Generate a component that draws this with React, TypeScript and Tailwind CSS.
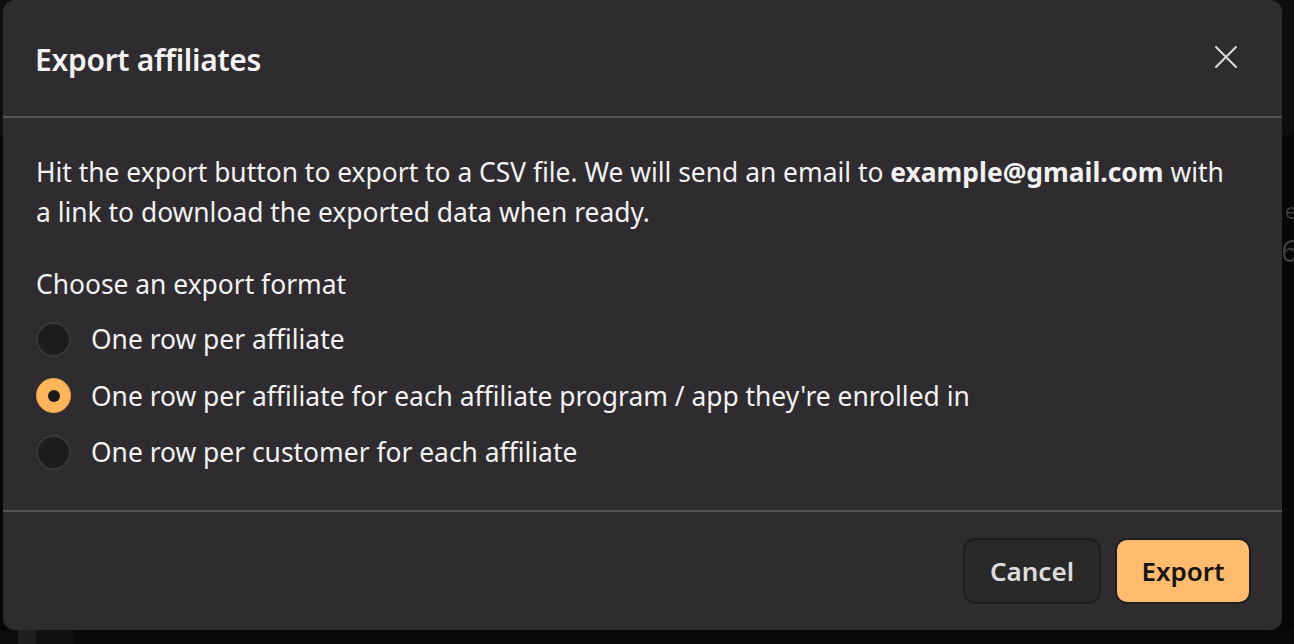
const options = [
  "One row per affiliate",
  "One row per affiliate for each affiliate program / app they're enrolled in",
  "One row per customer for each affiliate",
];

const App = () => {
  const selected = 1;

  return (
    <div className="relative w-full h-[644px] overflow-hidden bg-[#070707] font-['Noto_Sans',sans-serif]">
      {/* Page behind the backdrop */}
      <div className="h-[135px] bg-[#0e0e0e]" />
      <div className="flex justify-end pt-[60px]">
        <div className="w-[11px] overflow-hidden flex flex-col gap-2 text-[#3c3c3c]">
          <span className="text-[22px] leading-[30px] -ml-[4px]">ie</span>
          <span className="text-[30px] leading-[36px] -ml-[2px]">6</span>
        </div>
      </div>
      <div className="absolute left-0 bottom-0 flex h-[14px] w-full">
        <div className="w-[18px] bg-[#0b0b0b]" />
        <div className="w-[18px] bg-[#202020]" />
        <div className="w-[38px] bg-[#111111]" />
        <div className="flex-1 bg-[#0a0a0a]" />
      </div>

      {/* Modal */}
      <div className="absolute left-[3px] top-0 w-[1279px] h-[630px] rounded-[12px] bg-[#2e2c2e] text-[#f2f2f2] flex flex-col">
        <div className="h-[118px] flex items-center justify-between pl-[32px] pr-[44px] border-b-2 border-[#555555]">
          <h2 className="text-[30px] font-semibold tracking-[-0.3px] pt-[2px]">Export affiliates</h2>
          <button className="text-[#dcdcdc] mb-[2px]">
            <svg width="24" height="24" viewBox="0 0 24 24" fill="none" stroke="currentColor" strokeWidth="2" strokeLinecap="round">
              <path d="M2 2 L22 22 M22 2 L2 22" />
            </svg>
          </button>
        </div>

        <div className="flex-1 pl-[33px] pr-[46px] pt-[34px]">
          <p className="text-[26.4px] leading-[40px]">
            Hit the export button to export to a CSV file. We will send an email to{" "}
            <span className="font-bold">example@gmail.com</span> with a link to download the exported data when ready.
          </p>
          <p className="text-[26.4px] leading-[40px] mt-[32px]">Choose an export format</p>
          <div className="flex flex-col gap-[16px] mt-[15px]">
            {options.map((label, i) => (
              <label key={i} className="flex items-center gap-[20px] h-[40.5px]">
                {i === selected ? (
                  <span className="w-[35px] h-[35px] rounded-full bg-[#fdb55b] border border-[#e9a44f] flex items-center justify-center">
                    <span className="w-[12px] h-[12px] rounded-full bg-[#1b1a1c]" />
                  </span>
                ) : (
                  <span className="w-[35px] h-[35px] rounded-full bg-[#1d1c1e] border-2 border-[#393839]" />
                )}
                <span className="text-[26.4px] leading-[40px]">{label}</span>
              </label>
            ))}
          </div>
        </div>

        <div className="h-[120px] border-t-2 border-[#555555] flex items-center justify-end gap-[14px] pr-[31px]">
          <button className="w-[138px] h-[66px] rounded-[12px] bg-[#2a292a] border-2 border-[#1f1e1f] text-[#dcdcdc] text-[26px] font-semibold">
            Cancel
          </button>
          <button className="w-[136px] h-[66px] rounded-[12px] bg-[#ffbb6e] border-2 border-[#1f1e1f] text-[#151515] text-[26px] font-semibold">
            Export
          </button>
        </div>
      </div>
    </div>
  );
};

export default App;
